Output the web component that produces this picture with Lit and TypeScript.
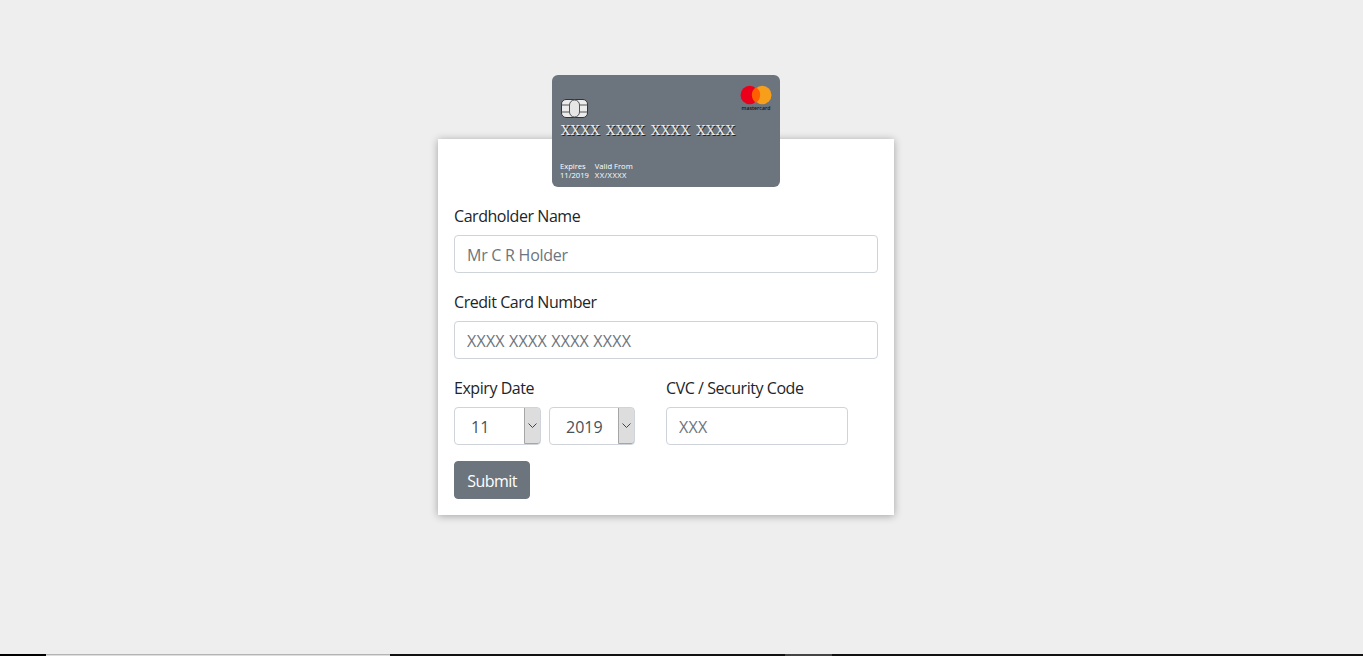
import { LitElement, html, css } from "lit";
import { customElement } from "lit/decorators.js";

@customElement("app-root")
export class AppRoot extends LitElement {
  static styles = css`
    :host {
      display: flex;
      flex-direction: column;
      height: 100vh;
      background: #eeeeee;
      font-family: "Open Sans", "Noto Sans", sans-serif;
      font-size: 16px;
      line-height: 24px;
      letter-spacing: -0.45px;
      color: #212529;
      overflow: hidden;
    }
    * { box-sizing: border-box; }
    .page { flex: 1; display: flex; justify-content: center; align-items: flex-start; padding: 139px 31px 0 0; }
    .panel {
      position: relative;
      width: 456px;
      height: 376px;
      background: #fff;
      padding: 65px 16px 16px;
      box-shadow: 0 1px 8px rgba(0, 0, 0, 0.32);
    }
    .card {
      position: absolute;
      left: 114px;
      top: -64px;
      width: 228px;
      height: 112px;
      border-radius: 6px;
      background: #6c757d;
      padding: 9px 8px 7px 9px;
      color: #fff;
      display: flex;
      flex-direction: column;
      letter-spacing: 0;
    }
    .logo { display: block; margin-left: auto; flex: none; height: 27px; }
    .chip { margin-top: -12px; display: block; flex: none; }
    .num {
      margin-top: 4px;
      font-family: "DejaVu Serif", serif;
      font-size: 13px;
      line-height: 18px;
      letter-spacing: 0.6px;
      word-spacing: 0.9px;
      white-space: pre;
      color: #ececec;
      text-shadow: 1px 1px 0 #222;
    }
    .dates { margin-top: auto; margin-left: -1px; display: flex; gap: 6px; font-size: 7.6px; line-height: 9px; }
    .dates div { display: flex; flex-direction: column; }
    .wide { letter-spacing: 0.4px; }
    .field { margin-bottom: 17px; }
    .last { margin-bottom: 16px; }
    label { display: block; margin-bottom: 7px; line-height: 24px; }
    input {
      display: block;
      width: 100%;
      height: 38px;
      border: 1px solid #ced4da;
      border-radius: 4px;
      padding: 7px 12px 5px;
      font: inherit;
      letter-spacing: -0.25px;
      color: #495057;
      background: #fff;
      outline: none;
    }
    input::placeholder { color: #6c757d; opacity: 1; }
    .xs { letter-spacing: 0.2px; }
    .row { display: flex; }
    .expiry { width: 212px; }
    .selects { display: flex; gap: 8px; }
    .sel {
      width: 87px;
      height: 38px;
      border: 1px solid #ced4da;
      border-radius: 4px;
      display: flex;
      overflow: hidden;
      background: #fff;
    }
    .sel + .sel { width: 86px; }
    select {
      appearance: none;
      -webkit-appearance: none;
      flex: 1;
      min-width: 0;
      border: 0;
      background: transparent;
      padding: 2px 0 0 16px;
      font: inherit;
      letter-spacing: 0;
      color: #495057;
      outline: none;
    }
    .arrow {
      width: 17px;
      flex: none;
      background: #dddddd;
      border: 1px solid #a6a6a6;
      border-radius: 0 3px 3px 0;
      display: flex;
      align-items: center;
      justify-content: center;
      margin: -1px -1px 0 0;
    }
    .cvc { width: 182px; }
    button {
      display: block;
      width: 76px;
      height: 38px;
      border: 1px solid #6c757d;
      border-radius: 4px;
      background: #6c757d;
      color: #fff;
      font: inherit;
      letter-spacing: -0.55px;
      padding: 1px 0 0;
    }
    .bar { flex: none; height: 2px; display: flex; background: #111; }
    .bar .a { width: 46px; background: #000; }
    .bar .b { width: 344px; background: #dedede; border-top: 1px solid #b4b4b4; }
    .bar .c { width: 395px; }
    .bar .d { width: 47px; background: #444; }
  `;

  render() {
    return html`
      <div class="page">
        <div class="panel">
          <div class="card">
            <svg class="logo" width="32" height="27" viewBox="0 0 32 27">
              <circle cx="9.700" cy="11" r="9.200" fill="#eb001b" />
              <circle cx="22.300" cy="11" r="9.200" fill="#f79e1b" />
              <path d="M16 3.300a9.200 9.200 0 0 1 0 15.400a9.200 9.200 0 0 1 0-15.400z" fill="#ff5f00" />
              <text x="16" y="25.500" font-size="5.200" text-anchor="middle" fill="#111" font-family="Open Sans" font-weight="600">mastercard</text>
            </svg>
            <svg class="chip" width="27" height="19" viewBox="0 0 27 19" fill="#ececec" stroke="#333" stroke-width="1">
              <rect x="0.500" y="0.500" width="26" height="18" rx="4.500" />
              <rect x="8.500" y="1" width="10" height="17" rx="5" fill="#e6e6e6" stroke="#555" />
              <path d="M0.500 6H8M0.500 13H8M19 6H26.500M19 13H26.500" fill="none" stroke="#555" />
            </svg>
            <div class="num">XXXX XXXX XXXX XXXX</div>
            <div class="dates">
              <div><span>Expires</span><span>11/2019</span></div>
              <div><span>Valid From</span><span class="wide">XX/XXXX</span></div>
            </div>
          </div>
          <div class="field">
            <label>Cardholder Name</label>
            <input placeholder="Mr C R Holder" />
          </div>
          <div class="field">
            <label>Credit Card Number</label>
            <input class="xs" placeholder="XXXX XXXX XXXX XXXX" />
          </div>
          <div class="row last">
            <div class="expiry">
              <label>Expiry Date</label>
              <div class="selects">
                ${["11", "2019"].map(
                  (v) => html`
                    <div class="sel">
                      <select><option>${v}</option></select>
                      <span class="arrow">
                        <svg width="11" height="7" viewBox="0 0 11 7" fill="none" stroke="#444" stroke-width="1"><path d="M1.500 1.500l4 4 4-4" /></svg>
                      </span>
                    </div>
                  `
                )}
              </div>
            </div>
            <div class="cvc">
              <label>CVC / Security Code</label>
              <input class="xs" placeholder="XXX" />
            </div>
          </div>
          <button>Submit</button>
        </div>
      </div>
      <div class="bar">
        <div class="a"></div>
        <div class="b"></div>
        <div class="c"></div>
        <div class="d"></div>
      </div>
    `;
  }
}
